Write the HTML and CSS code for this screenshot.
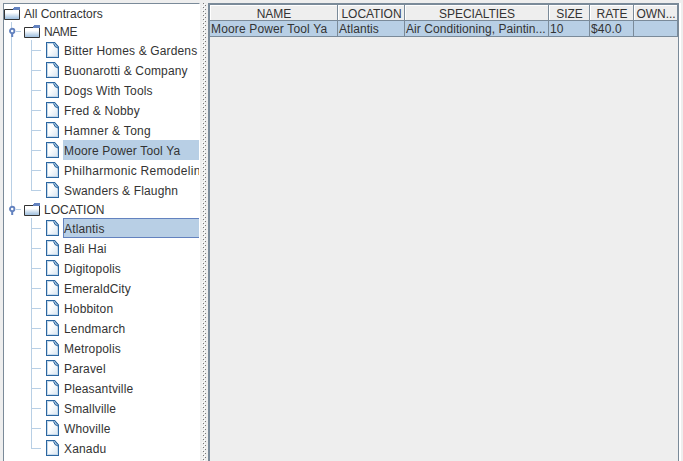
FILE: index.html
```html
<!DOCTYPE html>
<html lang="en">
<head>
<meta charset="utf-8">
<title>Contractors</title>
<link rel="stylesheet" href="styles.css">
</head>
<body>
<svg class="defs" width="0" height="0" aria-hidden="true">
  <defs>
    <linearGradient id="folderFill" x1="0" y1="0" x2="0" y2="1"><stop offset=".3" stop-color="#fff"/><stop offset=".9" stop-color="#a9c6e2"/></linearGradient>
    <linearGradient id="pageFill" x1="0" y1="0" x2="1" y2="1"><stop offset=".4" stop-color="#fff"/><stop offset="1" stop-color="#d3e2ef"/></linearGradient>
    <symbol id="folder" viewBox="0 0 16 13">
      <path d="M1 3H15V12H1Z" fill="url(#folderFill)"/>
      <path d="M9 2.500H.5V12.500H15.500V3" fill="none" stroke="#333"/>
      <path d="M10 0H16V3H9V1H10Z" fill="#6382bf"/>
    </symbol>
    <symbol id="page" viewBox="0 0 13 16">
      <path d="M.5 .5H8.500L12.500 5V15.500H.5Z" fill="url(#pageFill)" stroke="#2b66a0" stroke-width="1.200"/>
      <path d="M1.500 14.500V1.500H7M11.500 6V14.500H1.500" fill="none" stroke="#c5d9eb"/>
      <path d="M7 1H9L12 5V6L9 5Z" fill="#a9c6df"/>
      <path d="M7.500 1.500L9 4.500L12 6M9 1L12 4.500" fill="none" stroke="#2b66a0"/>
    </symbol>
    <symbol id="handle" viewBox="0 0 7 10">
      <path d="M3.200 6V10" stroke="#6382bf" stroke-width="2"/>
      <circle cx="3.200" cy="4" r="2.200" fill="#fff" stroke="#6382bf" stroke-width="1.900"/>
    </symbol>
  </defs>
</svg>
<main class="split">
  <nav class="tree">
    <div class="node root"><svg class="folder"><use href="#folder"/></svg><span>All Contractors</span></div>
    <section class="group">
      <div class="node branch"><svg class="handle"><use href="#handle"/></svg><i class="stub"></i><svg class="folder"><use href="#folder"/></svg><span class="tight">NAME</span></div>
      <ul>
        <li><svg><use href="#page"/></svg><span>Bitter Homes &amp; Gardens</span></li>
        <li><svg><use href="#page"/></svg><span>Buonarotti &amp; Company</span></li>
        <li><svg><use href="#page"/></svg><span>Dogs With Tools</span></li>
        <li><svg><use href="#page"/></svg><span>Fred &amp; Nobby</span></li>
        <li><svg><use href="#page"/></svg><span class="loose">Hamner &amp; Tong</span></li>
        <li class="selected"><svg><use href="#page"/></svg><span>Moore Power Tool Ya</span></li>
        <li><svg><use href="#page"/></svg><span class="loose">Philharmonic Remodelin</span></li>
        <li><svg><use href="#page"/></svg><span>Swanders &amp; Flaughn</span></li>
      </ul>
    </section>
    <section class="group last">
      <div class="node branch"><svg class="handle"><use href="#handle"/></svg><i class="stub"></i><svg class="folder"><use href="#folder"/></svg><span>LOCATION</span></div>
      <ul>
        <li class="selected focused"><svg><use href="#page"/></svg><span>Atlantis</span></li>
        <li><svg><use href="#page"/></svg><span>Bali Hai</span></li>
        <li><svg><use href="#page"/></svg><span>Digitopolis</span></li>
        <li><svg><use href="#page"/></svg><span>EmeraldCity</span></li>
        <li><svg><use href="#page"/></svg><span>Hobbiton</span></li>
        <li><svg><use href="#page"/></svg><span>Lendmarch</span></li>
        <li><svg><use href="#page"/></svg><span>Metropolis</span></li>
        <li><svg><use href="#page"/></svg><span>Paravel</span></li>
        <li><svg><use href="#page"/></svg><span>Pleasantville</span></li>
        <li><svg><use href="#page"/></svg><span>Smallville</span></li>
        <li><svg><use href="#page"/></svg><span>Whoville</span></li>
        <li><svg><use href="#page"/></svg><span>Xanadu</span></li>
      </ul>
    </section>
  </nav>
  <div class="divider"></div>
  <div class="pane">
    <div class="grid head"><span>NAME</span><span>LOCATION</span><span>SPECIALTIES</span><span>SIZE</span><span>RATE</span><span>OWN...</span></div>
    <div class="grid row"><span>Moore Power Tool Ya</span><span class="close">Atlantis</span><span class="close">Air Conditioning, Paintin...</span><span>10</span><span>$40.0</span><span></span></div>
  </div>
</main>
</body>
</html>
```
FILE: styles.css
```css
* { box-sizing: border-box; }
body {
  margin: 0;
  height: 461px;
  overflow: hidden;
  background: #eee;
  color: #333;
  font: 12px/18px "Liberation Sans", Arial, sans-serif;
  letter-spacing: .15px;
  white-space: nowrap;
}
.defs { position: absolute; }
.split { display: flex; height: 461px; padding: 3px 1px 0 3px; }
.tree {
  width: 197px;
  border: solid #7a8a99;
  border-width: 1px 0 0 1px;
  border-right: 1px solid #fff;
  background: #fff;
  overflow: hidden;
}
.node { display: flex; height: 18px; align-items: center; letter-spacing: 0; }
.folder { width: 16px; height: 13px; flex: none; margin-top: 1px; }
.node span { margin-left: 4px; padding-top: 2px; }
.node .tight { letter-spacing: -.4px; }
.branch { padding-left: 5px; }
.handle { width: 7px; height: 10px; flex: none; margin-top: 2px; }
.stub { width: 5px; height: 1px; margin: 1px 3px 0 0; background: #b8cfe5; }
.group { background: linear-gradient(#b8cfe5, #b8cfe5) 7px 0 / 1px 100% no-repeat; }
.group.last { background-size: 1px 9px; }
ul { list-style: none; margin: 0; padding: 0 0 0 27px; }
li {
  display: flex;
  align-items: center;
  height: 20px;
  background:
    linear-gradient(#b8cfe5, #b8cfe5) 0 0 / 1px 100% no-repeat,
    linear-gradient(#b8cfe5, #b8cfe5) 0 10px / 10px 1px no-repeat;
}
li:last-child { background-size: 1px 11px, 10px 1px; }
li svg { width: 13px; height: 16px; margin: 0 4px 0 15px; flex: none; }
li span { flex: 1; height: 20px; line-height: 23px; padding-left: 1px; }
li .loose { letter-spacing: .3px; }
.selected span { background: #b8cfe5; }
.focused span { border: solid #6382bf; border-width: 1px 0; line-height: 20px; box-shadow: inset 1px 0 #6382bf; }
.divider {
  width: 8px;
  background:
    conic-gradient(from 0deg at 1px 1px, transparent 270deg, #777 0) 3px 4px / 20px 4px,
    conic-gradient(from 0deg at 1px 1px, transparent 270deg, #777 0) 5px 6px / 20px 4px,
    conic-gradient(from 0deg at 1px 1px, transparent 270deg, #fff 0) 2px 3px / 20px 4px,
    conic-gradient(from 0deg at 1px 1px, transparent 270deg, #fff 0) 4px 5px / 20px 4px;
  background-repeat: repeat-y;
}
.pane {
  width: 471px;
  border: solid #7a8a99;
  border-width: 2px 1px 0 2px;
  box-shadow: 1px 0 #fff, 2px 0 #fff;
}
.grid { display: grid; grid-template-columns: 128px 67px 144px 41px 44px 1fr; }
.grid span { border-right: 1px solid #7a8a99; border-bottom: 1px solid #7a8a99; }
.head { letter-spacing: -.05px; }
.head span { height: 16px; padding-left: 1px; line-height: 18px; text-align: center; box-shadow: inset 1px 1px #fff; }
.row span { height: 16px; line-height: 16px; padding-left: 1px; background: #b8cfe5; }
.row .close { letter-spacing: .06px; }
```
